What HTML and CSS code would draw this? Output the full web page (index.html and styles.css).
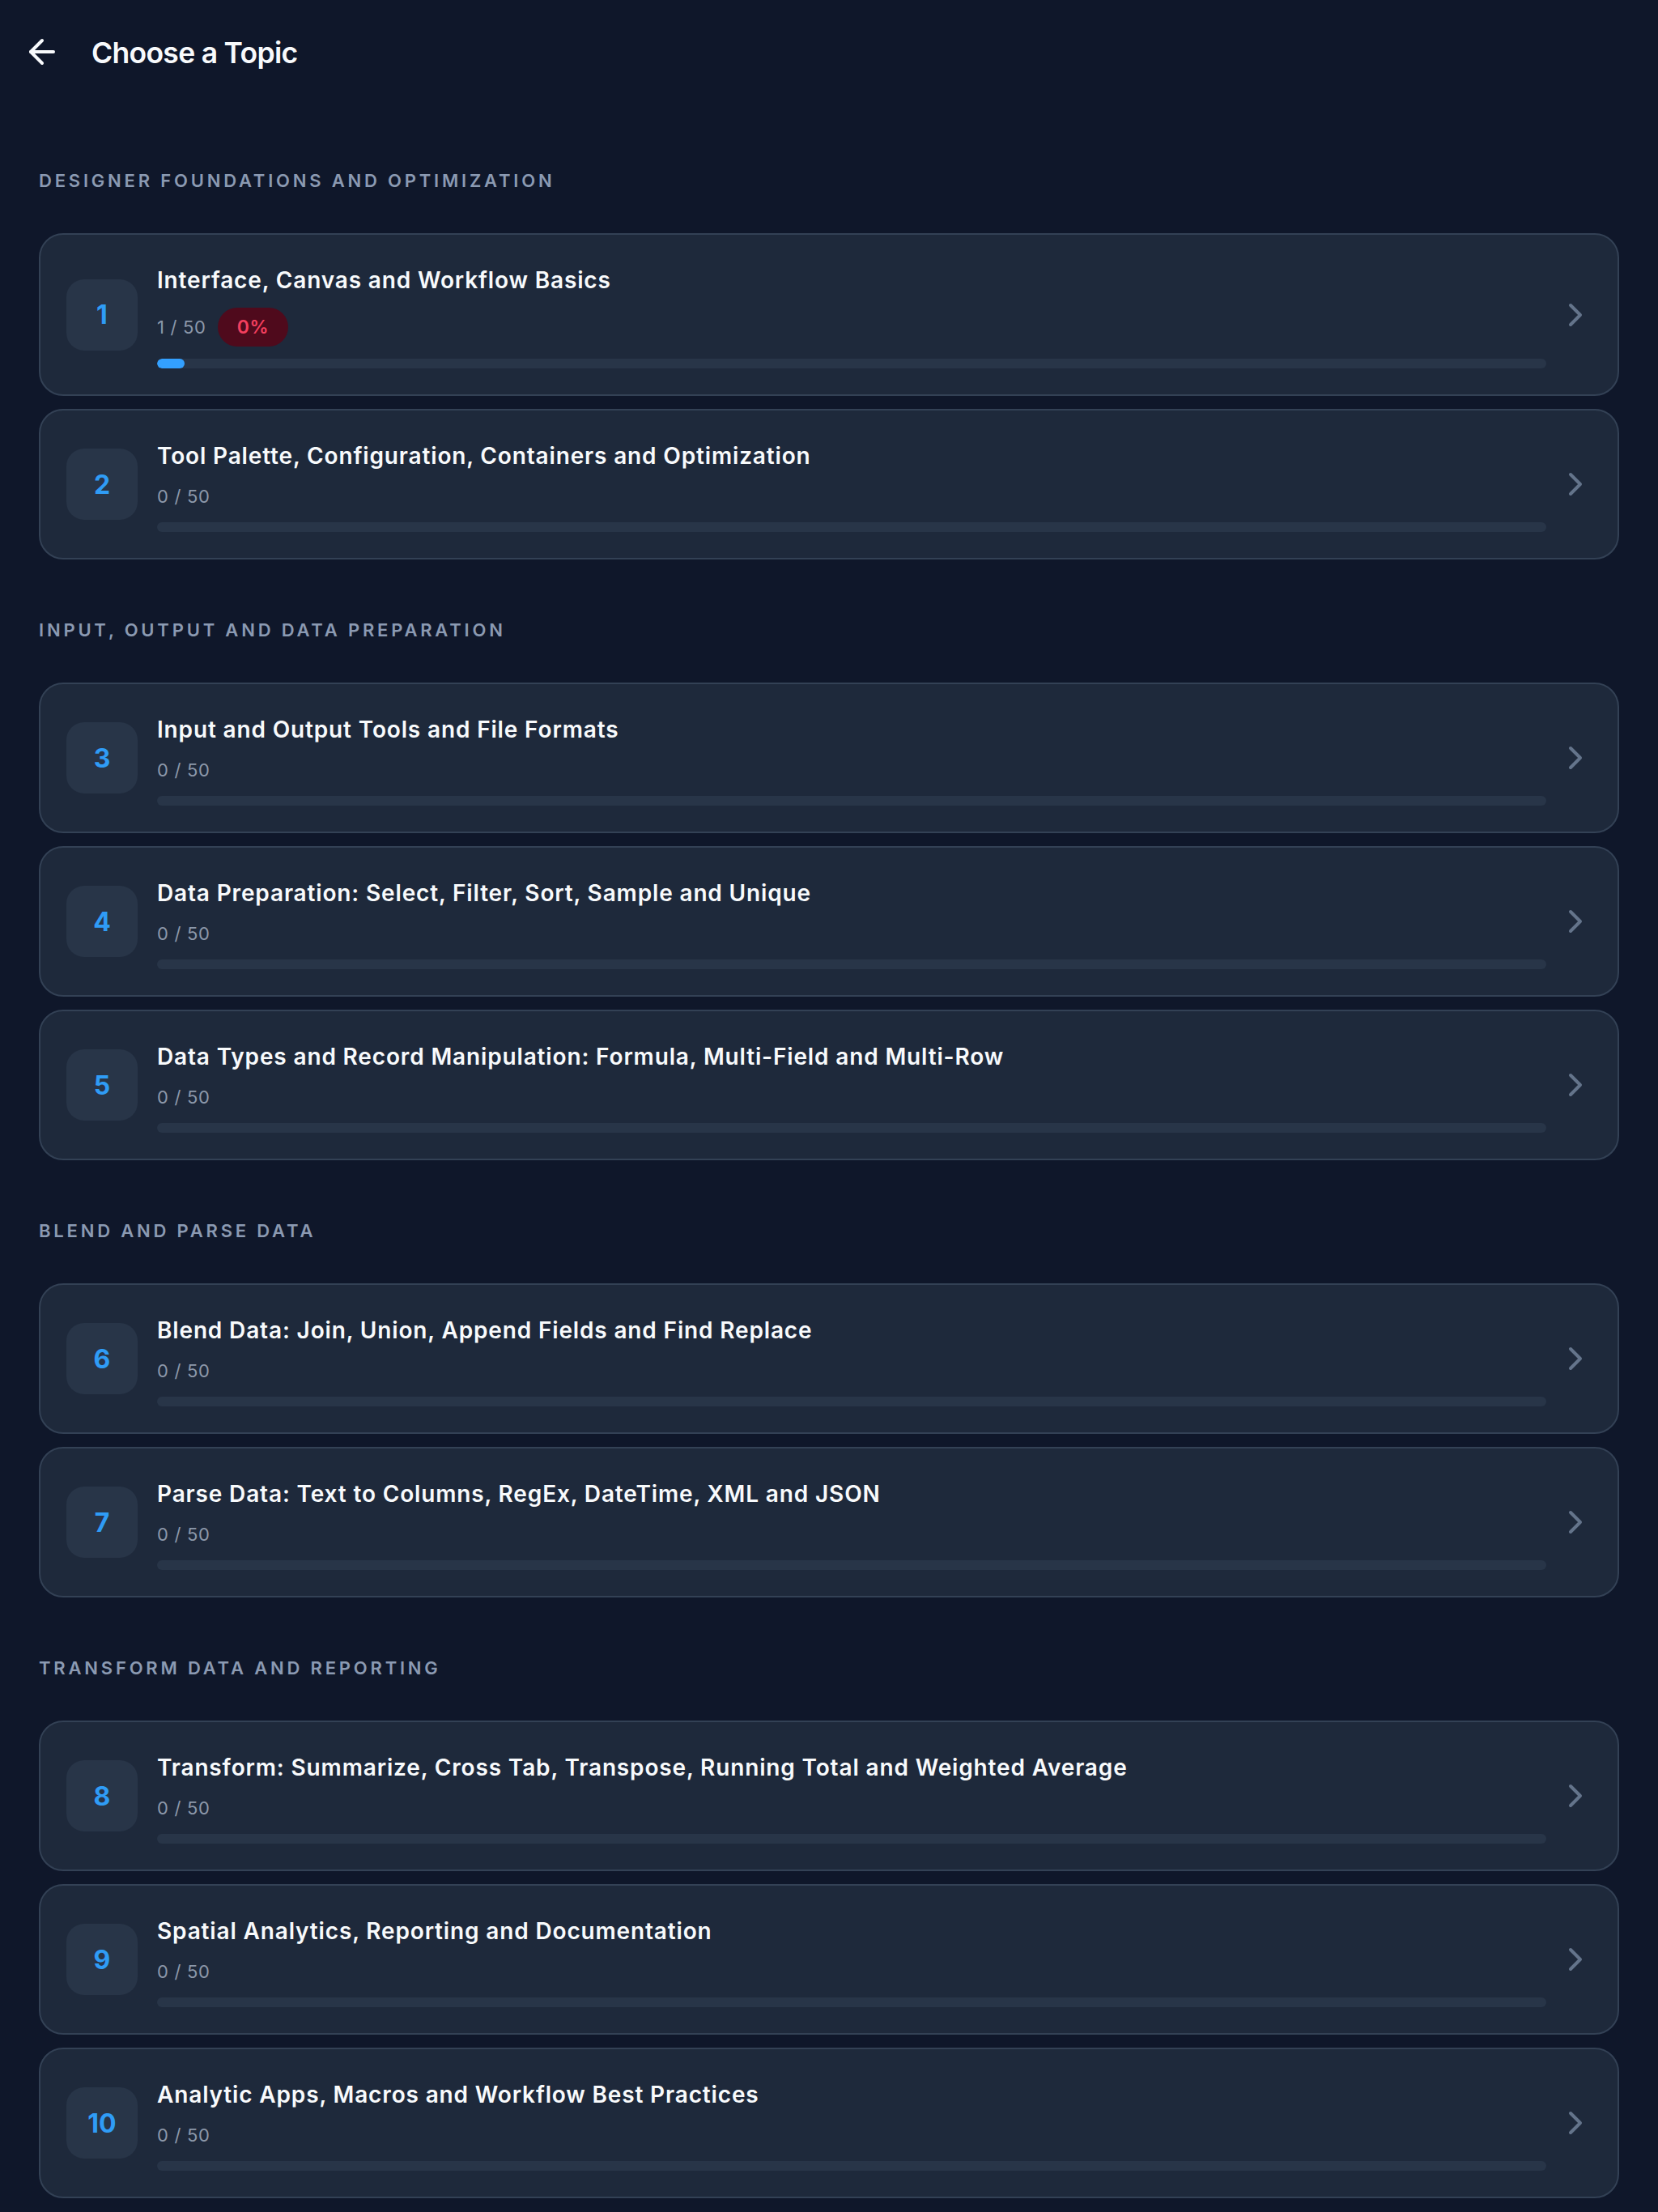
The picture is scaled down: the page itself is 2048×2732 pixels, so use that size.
FILE: index.html
```html
<!DOCTYPE html>
<html lang="en">
<head>
<meta charset="utf-8">
<title>Choose a Topic</title>
<link rel="stylesheet" href="styles.css">
</head>
<body>
<header class="topbar">
  <button class="back" aria-label="Back">
    <svg viewBox="0 0 24 24" width="48" height="48" fill="none" stroke="currentColor" stroke-width="2" stroke-linecap="round" stroke-linejoin="round"><path d="m12 19-7-7 7-7"/><path d="M19 12H5"/></svg>
  </button>
  <h1 class="page-title">Choose a Topic</h1>
</header>

<main class="content">
  <section class="group">
    <h2 class="group-label">Designer Foundations and Optimization</h2>
    <div class="cards">
      <a class="card">
        <div class="num">1</div>
        <div class="info">
          <div class="title">Interface, Canvas and Workflow Basics</div>
          <div class="meta"><span class="count">1 / 50</span><span class="badge">0%</span></div>
          <div class="track"><div class="fill" style="width:2%"></div></div>
        </div>
        <svg class="chev" viewBox="0 0 24 24" width="48" height="48" fill="none" stroke="currentColor" stroke-width="2" stroke-linecap="round" stroke-linejoin="round"><path d="m9 18 6-6-6-6"/></svg>
      </a>
      <a class="card">
        <div class="num">2</div>
        <div class="info">
          <div class="title">Tool Palette, Configuration, Containers and Optimization</div>
          <div class="meta"><span class="count">0 / 50</span></div>
          <div class="track"></div>
        </div>
        <svg class="chev" viewBox="0 0 24 24" width="48" height="48" fill="none" stroke="currentColor" stroke-width="2" stroke-linecap="round" stroke-linejoin="round"><path d="m9 18 6-6-6-6"/></svg>
      </a>
    </div>
  </section>

  <section class="group">
    <h2 class="group-label">Input, Output and Data Preparation</h2>
    <div class="cards">
      <a class="card">
        <div class="num">3</div>
        <div class="info">
          <div class="title">Input and Output Tools and File Formats</div>
          <div class="meta"><span class="count">0 / 50</span></div>
          <div class="track"></div>
        </div>
        <svg class="chev" viewBox="0 0 24 24" width="48" height="48" fill="none" stroke="currentColor" stroke-width="2" stroke-linecap="round" stroke-linejoin="round"><path d="m9 18 6-6-6-6"/></svg>
      </a>
      <a class="card">
        <div class="num">4</div>
        <div class="info">
          <div class="title">Data Preparation: Select, Filter, Sort, Sample and Unique</div>
          <div class="meta"><span class="count">0 / 50</span></div>
          <div class="track"></div>
        </div>
        <svg class="chev" viewBox="0 0 24 24" width="48" height="48" fill="none" stroke="currentColor" stroke-width="2" stroke-linecap="round" stroke-linejoin="round"><path d="m9 18 6-6-6-6"/></svg>
      </a>
      <a class="card">
        <div class="num">5</div>
        <div class="info">
          <div class="title">Data Types and Record Manipulation: Formula, Multi-Field and Multi-Row</div>
          <div class="meta"><span class="count">0 / 50</span></div>
          <div class="track"></div>
        </div>
        <svg class="chev" viewBox="0 0 24 24" width="48" height="48" fill="none" stroke="currentColor" stroke-width="2" stroke-linecap="round" stroke-linejoin="round"><path d="m9 18 6-6-6-6"/></svg>
      </a>
    </div>
  </section>

  <section class="group">
    <h2 class="group-label">Blend and Parse Data</h2>
    <div class="cards">
      <a class="card">
        <div class="num">6</div>
        <div class="info">
          <div class="title">Blend Data: Join, Union, Append Fields and Find Replace</div>
          <div class="meta"><span class="count">0 / 50</span></div>
          <div class="track"></div>
        </div>
        <svg class="chev" viewBox="0 0 24 24" width="48" height="48" fill="none" stroke="currentColor" stroke-width="2" stroke-linecap="round" stroke-linejoin="round"><path d="m9 18 6-6-6-6"/></svg>
      </a>
      <a class="card">
        <div class="num">7</div>
        <div class="info">
          <div class="title">Parse Data: Text to Columns, RegEx, DateTime, XML and JSON</div>
          <div class="meta"><span class="count">0 / 50</span></div>
          <div class="track"></div>
        </div>
        <svg class="chev" viewBox="0 0 24 24" width="48" height="48" fill="none" stroke="currentColor" stroke-width="2" stroke-linecap="round" stroke-linejoin="round"><path d="m9 18 6-6-6-6"/></svg>
      </a>
    </div>
  </section>

  <section class="group">
    <h2 class="group-label">Transform Data and Reporting</h2>
    <div class="cards">
      <a class="card">
        <div class="num">8</div>
        <div class="info">
          <div class="title">Transform: Summarize, Cross Tab, Transpose, Running Total and Weighted Average</div>
          <div class="meta"><span class="count">0 / 50</span></div>
          <div class="track"></div>
        </div>
        <svg class="chev" viewBox="0 0 24 24" width="48" height="48" fill="none" stroke="currentColor" stroke-width="2" stroke-linecap="round" stroke-linejoin="round"><path d="m9 18 6-6-6-6"/></svg>
      </a>
      <a class="card">
        <div class="num">9</div>
        <div class="info">
          <div class="title">Spatial Analytics, Reporting and Documentation</div>
          <div class="meta"><span class="count">0 / 50</span></div>
          <div class="track"></div>
        </div>
        <svg class="chev" viewBox="0 0 24 24" width="48" height="48" fill="none" stroke="currentColor" stroke-width="2" stroke-linecap="round" stroke-linejoin="round"><path d="m9 18 6-6-6-6"/></svg>
      </a>
      <a class="card">
        <div class="num">10</div>
        <div class="info">
          <div class="title">Analytic Apps, Macros and Workflow Best Practices</div>
          <div class="meta"><span class="count">0 / 50</span></div>
          <div class="track"></div>
        </div>
        <svg class="chev" viewBox="0 0 24 24" width="48" height="48" fill="none" stroke="currentColor" stroke-width="2" stroke-linecap="round" stroke-linejoin="round"><path d="m9 18 6-6-6-6"/></svg>
      </a>
    </div>
  </section>
</main>
</body>
</html>
```

FILE: styles.css
```css
* { box-sizing: border-box; }

html, body {
  margin: 0;
  padding: 0;
  background: #0f172a;
}

body {
  font-family: Inter, "Noto Sans", "Liberation Sans", sans-serif;
  color: #f8fafc;
}

.topbar {
  height: 128px;
  display: flex;
  align-items: center;
  gap: 37px;
  padding-left: 28px;
}

.back {
  width: 48px;
  height: 48px;
  padding: 0;
  border: 0;
  background: none;
  color: #f8fafc;
  display: flex;
}

.page-title {
  margin: 0;
  padding-top: 3px;
  font-size: 35.5px;
  font-weight: 600;
  line-height: 44px;
  letter-spacing: -0.7px;
}

.content {
  padding: 81px 48px 16px;
}

.group + .group {
  margin-top: 73px;
}

.group-label {
  margin: 0 0 51px;
  font-size: 22px;
  line-height: 28px;
  font-weight: 600;
  letter-spacing: 3.8px;
  text-transform: uppercase;
  color: #8b9ab2;
}

.cards {
  display: flex;
  flex-direction: column;
  gap: 16px;
}

.card {
  display: flex;
  align-items: center;
  gap: 24px;
  padding: 32px 28px 32px 32px;
  background: #1e293b;
  border: 2px solid #334155;
  border-radius: 30px;
}

.num {
  flex: none;
  width: 88px;
  height: 88px;
  border-radius: 22px;
  background: #283548;
  color: #2f9cf6;
  font-size: 32px;
  font-weight: 700;
  display: flex;
  align-items: center;
  justify-content: center;
}

.info {
  flex: 1;
  min-width: 0;
}

.title {
  padding-top: 2px;
  font-size: 28px;
  line-height: 44px;
  font-weight: 600;
  color: #f8fafc;
  letter-spacing: 0.85px;
}

.meta {
  margin-top: 12px;
  min-height: 33px;
  display: flex;
  align-items: center;
  gap: 14px;
}

.count {
  font-size: 22px;
  line-height: 33px;
  color: #8c98aa;
  letter-spacing: 0.7px;
}

.badge {
  height: 48px;
  padding: 0 24px;
  border-radius: 24px;
  background: #4f0a1c;
  color: #f43f5e;
  font-size: 23px;
  font-weight: 600;
  letter-spacing: 0.6px;
  display: flex;
  align-items: center;
}

.track {
  margin-top: 15px;
  height: 12px;
  border-radius: 6px;
  background: #283548;
  overflow: hidden;
}

.fill {
  height: 100%;
  border-radius: 6px;
  background: #33a0ff;
}

.chev {
  flex: none;
  color: #64748b;
  margin-left: -12px;
}
```
